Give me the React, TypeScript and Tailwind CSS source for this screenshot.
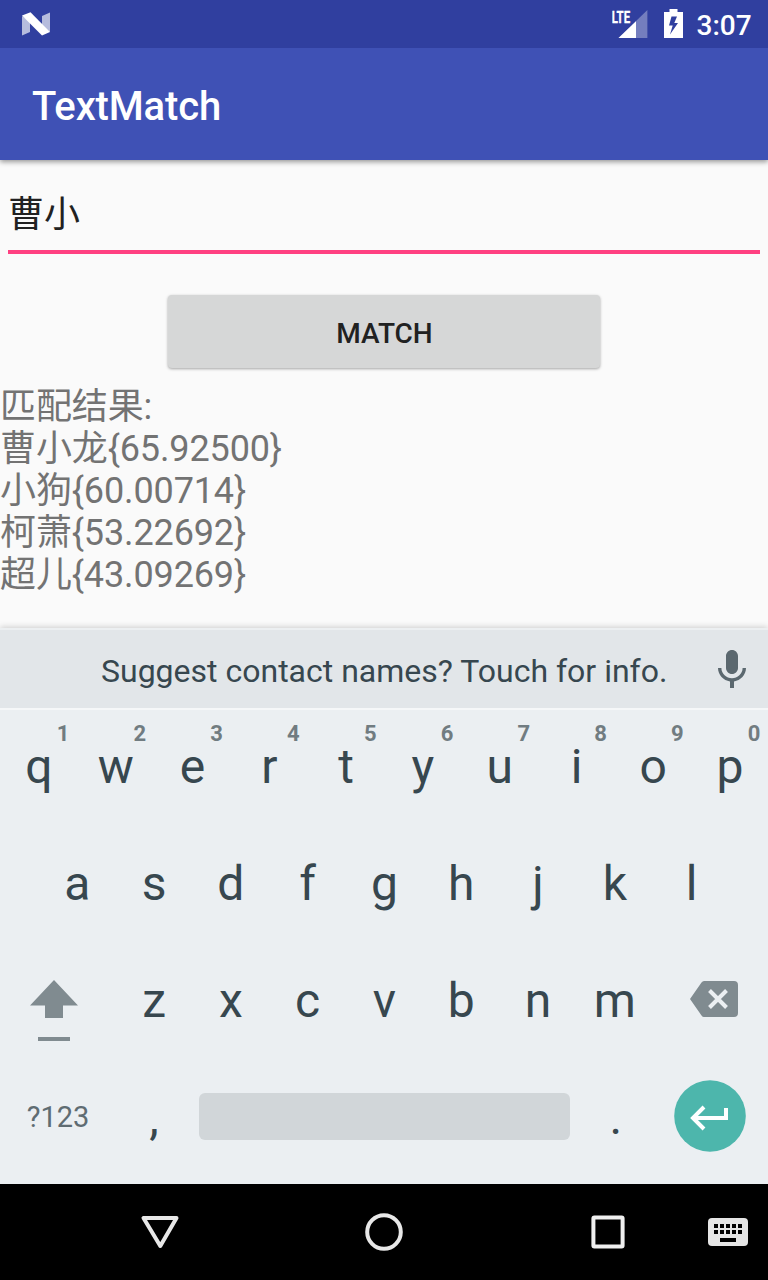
import React from "react";

const results = [
  "曹小龙{65.92500}",
  "小狗{60.00714}",
  "柯萧{53.22692}",
  "超儿{43.09269}",
];

function StatusBar() {
  return (
    <header className="relative z-10 flex h-12 shrink-0 items-start bg-[#303f9f] text-white">
      <svg className="ml-[22px] mt-3 h-6 w-7" viewBox="0 0 28 24">
        <path d="M0 4L8 9V20L0 23.5ZM20 4L28 .5V20L20 15Z" fill="#fff" fillOpacity=".65" />
        <path d="M0 3.4L8.5 .3L28 20L20 23.5Z" fill="#fff" />
      </svg>
      <svg className="ml-auto mt-2 h-8 w-9" viewBox="0 0 36 32">
        <path d="M35.4 2V30H6.5Z" fill="#fff" fillOpacity=".33" />
        <path d="M24 13.3V30H6.5Z" fill="#fff" />
        <text x="-.3" y="14.7" fontFamily="Roboto" fontWeight="700" fontSize="17" textLength="18.4" lengthAdjust="spacingAndGlyphs" fill="#fff" stroke="#fff" strokeWidth=".3">LTE</text>
      </svg>
      <svg className="ml-4 mt-[9px] h-[29px] w-[19px]" viewBox="0 0 19 29">
        <path d="M5.5 0H13.5V3H19V29H0V3H5.5Z" fill="#fff" />
        <path d="M13 7.5H7.5L5 16.5H8.7L6 25.5L14 14H10.3Z" fill="#303f9f" />
      </svg>
      <span className="ml-[13.5px] mr-4 mt-[10px] w-[55.5px] whitespace-nowrap text-[28px] leading-8 font-medium">3:07</span>
    </header>
  );
}

function Key({ label, hint }: { label: string; hint?: string }) {
  return (
    <div className="relative flex h-[117px] w-[76.8px] shrink-0 items-center justify-center pl-px text-[48px] leading-none text-[#37474f]">
      {label}
      {hint && (
        <span className="absolute left-[53px] top-[14px] w-5 text-center text-[22px] leading-6 font-bold text-[#717c81]">
          {hint}
        </span>
      )}
    </div>
  );
}

function Keyboard() {
  return (
    <section className="flex h-[556px] shrink-0 flex-col border-t-2 border-[#eceff1] bg-[#ebeff2] shadow-[0_-1px_6px_rgba(0,0,0,0.18)]">
      <div className="flex h-20 shrink-0 items-center border-b-2 border-[#f5f7f8] bg-[#e2e6e9]">
        <span className="ml-[101px] mt-1 whitespace-nowrap text-[32px] leading-10 text-[#37474f]">
          Suggest contact names? Touch for info.
        </span>
        <svg className="ml-auto mr-[12.4px] mt-0.5 h-12 w-12" viewBox="0 0 24 24" fill="#5b686f">
          <path d="M12 14c1.66 0 3-1.34 3-3V5c0-1.66-1.34-3-3-3S9 3.34 9 5v6c0 1.66 1.34 3 3 3zm5.3-3c0 3-2.54 5.1-5.3 5.1S6.7 14 6.7 11H5c0 3.41 2.72 6.23 6 6.72V21h2v-3.28c3.28-.48 6-3.3 6-6.72h-1.7z" />
        </svg>
      </div>
      <div className="-mt-0.5 flex">
        {"qwertyuiop".split("").map((c, i) => (
          <Key key={c} label={c} hint={"1234567890"[i]} />
        ))}
      </div>
      <div className="flex justify-center">
        {"asdfghjkl".split("").map((c) => (
          <Key key={c} label={c} />
        ))}
      </div>
      <div className="flex h-[117px]">
        <div className="flex w-[115.2px] shrink-0 pl-[30px] pt-[38px]">
          <svg className="h-[61px] w-12" viewBox="0 0 48 61" fill="#808b90">
            <path d="M24 0L48 25.5H33V38H15V25.5H0ZM8 57H40V61H8Z" />
          </svg>
        </div>
        {"zxcvbnm".split("").map((c) => (
          <Key key={c} label={c} />
        ))}
        <div className="flex pl-[37.2px] pt-[39px]">
          <svg className="h-9 w-12" viewBox="0 0 48 36">
            <path d="M14 0H44Q48 0 48 4V32Q48 36 44 36H14Q12.5 36 11.5 34.5L0 18L11.5 1.5Q12.5 0 14 0Z" fill="#808b90" />
            <path d="M19.5 9.5L36.5 26.5M36.5 9.5L19.5 26.5" stroke="#ebeff2" strokeWidth="4" />
          </svg>
        </div>
      </div>
      <div className="flex h-[117px]">
        <div className="flex w-[115.2px] shrink-0 items-center justify-center pl-px text-[29px] text-[#5f6c72]">?123</div>
        <Key label="," />
        <div className="mx-[7px] mt-[34px] h-[47px] w-[371px] shrink-0 rounded-md bg-[#d1d6d9]" />
        <Key label="." />
        <svg className="ml-5 mt-[21px] h-[72px] w-[72px] shrink-0" viewBox="0 0 72 72">
          <circle cx="36" cy="36" r="35.8" fill="#4db6ac" />
          <path d="M52 28V38H19M30 27L19 38L30 49" fill="none" stroke="#fff" strokeWidth="4" />
        </svg>
      </div>
    </section>
  );
}

function NavigationBar() {
  return (
    <nav className="flex h-24 shrink-0 items-center bg-black">
      <svg className="ml-[136px] h-12 w-12" viewBox="0 0 48 48">
        <path d="M7.5 10H40.5L24.3 38Z" fill="none" stroke="#e8e8e8" strokeWidth="4" strokeLinejoin="round" />
      </svg>
      <svg className="ml-44 h-12 w-12" viewBox="0 0 48 48">
        <circle cx="24" cy="24" r="16.8" fill="none" stroke="#e8e8e8" strokeWidth="4" />
      </svg>
      <svg className="ml-44 h-12 w-12" viewBox="0 0 48 48">
        <rect x="9.4" y="9.4" width="29.2" height="29.2" rx="1" fill="none" stroke="#f0f0f0" strokeWidth="4" />
      </svg>
      <svg className="ml-[76px] h-7 w-10" viewBox="0 0 40 28">
        <rect width="40" height="28" rx="4" fill="#e5e5e5" />
        <path d="M6 8H34M6 14H34" stroke="#000" strokeWidth="4" strokeDasharray="4 2" />
        <path d="M12 22H28" stroke="#000" strokeWidth="4" />
      </svg>
    </nav>
  );
}

export default function App() {
  return (
    <div className="flex h-[1280px] w-[768px] flex-col overflow-hidden bg-[#fafafa] font-[Roboto,'Noto_Sans_CJK_SC',sans-serif]">
      <StatusBar />
      <div className="flex h-28 shrink-0 items-center bg-[#3f51b5] pl-8 pt-1.5 shadow-[0_2px_5px_rgba(0,0,0,0.4)]">
        <h1 className="text-[40px] leading-none font-medium tracking-[-0.15px] text-white">TextMatch</h1>
      </div>
      <main className="flex h-[468px] shrink-0 flex-col">
        <div className="mx-2 flex h-[94px] shrink-0 items-start border-b-4 border-[#ff4081] pt-[34px] text-[36px] leading-[42px] text-[#212121]">
          曹小
        </div>
        <button className="mx-auto mt-[41px] h-[73px] w-[432px] shrink-0 rounded-[4px] bg-[#d6d7d7] pl-px pt-1 text-[28px] font-medium text-[#212121] shadow-[0_1px_3px_rgba(0,0,0,0.35)]">
          MATCH
        </button>
        <div className="mt-[18px] text-[36px] leading-[42px] tracking-[-0.12px] whitespace-nowrap text-[#737373]">
          <p>匹配结果:</p>
          {results.map((r) => (
            <p key={r}>{r}</p>
          ))}
        </div>
      </main>
      <Keyboard />
      <NavigationBar />
    </div>
  );
}
